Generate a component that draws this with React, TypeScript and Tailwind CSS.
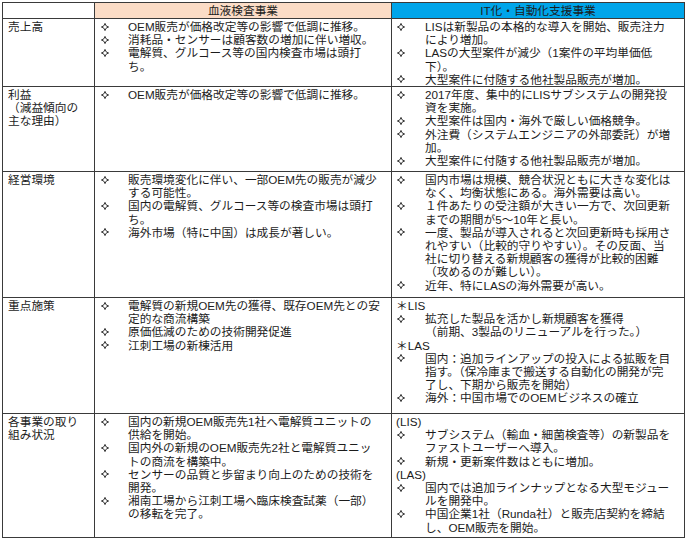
import React from "react";

type Entry = { t: "b"; lines: string[] } | { t: "h"; text: string };

const Bullet = () => (
  <svg width="8" height="8" viewBox="0 0 8 8" className="block">
    <path
      d="M4 0.4 Q4.5 3.5 7.6 4 Q4.5 4.5 4 7.6 Q3.5 4.5 0.4 4 Q3.5 3.5 4 0.4Z"
      fill="none"
      stroke="#222"
      strokeWidth="0.9"
    />
  </svg>
);

function Cell({ items, side }: { items: Entry[]; side: "l" | "r" }) {
  return (
    <div className="bg-white overflow-hidden text-[11.7px] leading-[13.2px] pt-[1px] flex flex-col">
      {items.map((it, i) =>
        it.t === "h" ? (
          <div key={i} className="pl-[4px] whitespace-nowrap">
            {it.text}
          </div>
        ) : (
          <div key={i} className="flex">
            <div
              className={`w-[33px] shrink-0 flex items-center h-[13.2px] ${
                side === "l" ? "pl-[6px]" : "pl-[5px]"
              }`}
            >
              <Bullet />
            </div>
            <div className="flex flex-col">
              {it.lines.map((ln, j) => (
                <span key={j} className="whitespace-nowrap">
                  {ln}
                </span>
              ))}
            </div>
          </div>
        )
      )}
    </div>
  );
}

const b = (...lines: string[]): Entry => ({ t: "b", lines });
const hd = (text: string): Entry => ({ t: "h", text });

function Label({ lines }: { lines: string[] }) {
  return (
    <div className="bg-white pl-[5px] pt-[1px] text-[11.7px] leading-[13.2px] flex flex-col">
      {lines.map((l, i) => (
        <span key={i} className="whitespace-nowrap">
          {l}
        </span>
      ))}
    </div>
  );
}

export default function App() {
  return (
    <div className="w-[686px] h-[539px] bg-white pt-[2px] pl-[2px] font-['Liberation_Sans','Noto_Sans_CJK_JP',sans-serif] text-[#1c1c1c]">
      <div className="w-[683px] grid grid-cols-[91px_296px_292px] grid-rows-[15px_67px_84px_125px_115px_123px] gap-px bg-[#3a3a3a] p-px">
        {/* header */}
        <div className="bg-white" />
        <div className="bg-[#fbdcc6] text-center text-[11.7px] leading-[15px]">血液検査事業</div>
        <div className="bg-[#00a5ea] text-center text-[11.7px] leading-[15px]">IT化・自動化支援事業</div>

        {/* row 1 */}
        <Label lines={["売上高"]} />
        <Cell
          side="l"
          items={[
            b("OEM販売が価格改定等の影響で低調に推移。"),
            b("消耗品・センサーは顧客数の増加に伴い増収。"),
            b("電解質、グルコース等の国内検査市場は頭打", "ち。"),
          ]}
        />
        <Cell
          side="r"
          items={[
            b("LISは新製品の本格的な導入を開始、販売注力", "により増加。"),
            b("LASの大型案件が減少（1案件の平均単価低", "下）。"),
            b("大型案件に付随する他社製品販売が増加。"),
          ]}
        />

        {/* row 2 */}
        <Label lines={["利益", "（減益傾向の", "主な理由）"]} />
        <Cell side="l" items={[b("OEM販売が価格改定等の影響で低調に推移。")]} />
        <Cell
          side="r"
          items={[
            b("2017年度、集中的にLISサブシステムの開発投", "資を実施。"),
            b("大型案件は国内・海外で厳しい価格競争。"),
            b("外注費（システムエンジニアの外部委託）が増", "加。"),
            b("大型案件に付随する他社製品販売が増加。"),
          ]}
        />

        {/* row 3 */}
        <Label lines={["経営環境"]} />
        <Cell
          side="l"
          items={[
            b("販売環境変化に伴い、一部OEM先の販売が減少", "する可能性。"),
            b("国内の電解質、グルコース等の検査市場は頭打", "ち。"),
            b("海外市場（特に中国）は成長が著しい。"),
          ]}
        />
        <Cell
          side="r"
          items={[
            b("国内市場は規模、競合状況ともに大きな変化は", "なく、均衡状態にある。海外需要は高い。"),
            b("１件あたりの受注額が大きい一方で、次回更新", "までの期間が5～10年と長い。"),
            b(
              "一度、製品が導入されると次回更新時も採用さ",
              "れやすい（比較的守りやすい）。その反面、当",
              "社に切り替える新規顧客の獲得が比較的困難",
              "（攻めるのが難しい）。"
            ),
            b("近年、特にLASの海外需要が高い。"),
          ]}
        />

        {/* row 4 */}
        <Label lines={["重点施策"]} />
        <Cell
          side="l"
          items={[
            b("電解質の新規OEM先の獲得、既存OEM先との安", "定的な商流構築"),
            b("原価低減のための技術開発促進"),
            b("江刺工場の新棟活用"),
          ]}
        />
        <Cell
          side="r"
          items={[
            hd("＊LIS"),
            b("拡充した製品を活かし新規顧客を獲得", "（前期、3製品のリニューアルを行った。）"),
            hd("＊LAS"),
            b(
              "国内：追加ラインアップの投入による拡販を目",
              "指す。（保冷庫まで搬送する自動化の開発が完",
              "了し、下期から販売を開始）"
            ),
            b("海外：中国市場でのOEMビジネスの確立"),
          ]}
        />

        {/* row 5 */}
        <Label lines={["各事業の取り", "組み状況"]} />
        <Cell
          side="l"
          items={[
            b("国内の新規OEM販売先1社へ電解質ユニットの", "供給を開始。"),
            b("国内外の新規のOEM販売先2社と電解質ユニッ", "トの商流を構築中。"),
            b("センサーの品質と歩留まり向上のための技術を", "開発。"),
            b("湘南工場から江刺工場へ臨床検査試薬（一部）", "の移転を完了。"),
          ]}
        />
        <Cell
          side="r"
          items={[
            hd("(LIS)"),
            b("サブシステム（輸血・細菌検査等）の新製品を", "ファストユーザーへ導入。"),
            b("新規・更新案件数はともに増加。"),
            hd("(LAS)"),
            b("国内では追加ラインナップとなる大型モジュー", "ルを開発中。"),
            b("中国企業1社（Runda社）と販売店契約を締結", "し、OEM販売を開始。"),
          ]}
        />
      </div>
    </div>
  );
}
